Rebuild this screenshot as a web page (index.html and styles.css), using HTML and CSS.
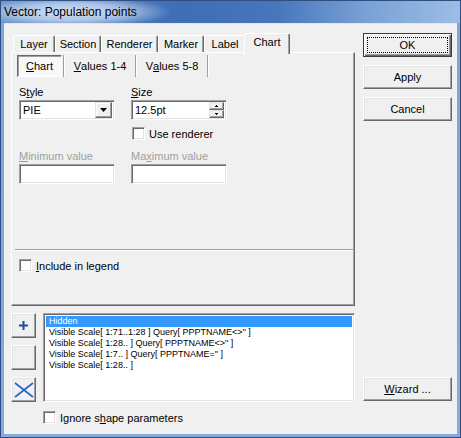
FILE: index.html
```html
<!DOCTYPE html>
<html>
<head>
<meta charset="utf-8">
<link rel="stylesheet" href="styles.css">
</head>
<body>
<div class="window">
  <div class="titlebar"><span class="title">Vector: Population points</span></div>
  <div class="client">
    <div class="leftcol">
      <div class="tabstrip">
        <div class="tab w42">Layer</div>
        <div class="tab w46">Section</div>
        <div class="tab w57">Renderer</div>
        <div class="tab w46">Marker</div>
        <div class="tab w42">Label</div>
        <div class="tab tab-active">Chart</div>
      </div>
      <div class="panel">
        <div class="itabs">
          <div class="itab itab-active"><u>C</u>hart</div>
          <div class="isep"></div>
          <div class="itab"><u>V</u>alues 1-4</div>
          <div class="isep"></div>
          <div class="itab">V<u>a</u>lues 5-8</div>
          <div class="isep"></div>
        </div>
        <div class="form">
          <div class="lbl">S<u>t</u>yle</div>
          <div class="lbl"><u>S</u>ize</div>
          <div class="field combo">
            <span class="val">PIE</span>
            <span class="dropbtn"><svg width="7" height="4" viewBox="0 0 7 4"><path d="M0 0H7L3.5 4Z" fill="#000"/></svg></span>
          </div>
          <div class="field">
            <span class="val">12.5pt</span>
            <span class="spinner">
              <span class="spinhalf"><svg width="3" height="2" viewBox="0 0 3 2"><path d="M1 0H2V1H3V2H0V1H1Z" fill="#000"/></svg></span>
              <span class="spinhalf"><svg width="3" height="2" viewBox="0 0 3 2"><path d="M0 0H3V1H2V2H1V1H0Z" fill="#000"/></svg></span>
            </span>
          </div>
          <div class="empty"></div>
          <div class="check renderer"><span class="box"></span><span>Use renderer</span></div>
          <div class="lbl dis low"><u>M</u>inimum value</div>
          <div class="lbl dis low">Ma<u>x</u>imum value</div>
          <div class="field"></div>
          <div class="field"></div>
        </div>
        <div class="hsep"></div>
        <div class="check legend"><span class="box"></span><span><u>I</u>nclude in legend</span></div>
      </div>
      <div class="lower">
        <div class="tools">
          <div class="btn tool"><svg width="9" height="9" viewBox="0 0 9 9"><path d="M3.5 0H5.5V3.5H9V5.5H5.5V9H3.5V5.5H0V3.5H3.5Z" fill="#1d4e9e"/></svg></div>
          <div class="btn tool"></div>
          <div class="btn tool"><svg width="20" height="16" viewBox="0 0 20 16"><path d="M1 1L19 15M19 1L1 15" stroke="#2a63c0" stroke-width="1.6" fill="none"/></svg></div>
        </div>
        <div class="list">
          <div class="row sel">Hidden</div>
          <div class="row">Visible Scale[ 1:71..1:28 ] Query[ PPPTNAME&lt;&gt;'' ]</div>
          <div class="row">Visible Scale[ 1:28.. ] Query[ PPPTNAME&lt;&gt;'' ]</div>
          <div class="row">Visible Scale[ 1:7.. ] Query[ PPPTNAME='' ]</div>
          <div class="row">Visible Scale[ 1:28.. ]</div>
        </div>
      </div>
      <div class="check ignore"><span class="box"></span><span>Ignore s<u>h</u>ape parameters</span></div>
    </div>
    <div class="rightcol">
      <div class="btn cmd default"><span class="focus">OK</span></div>
      <div class="btn cmd">Apply</div>
      <div class="btn cmd">Cancel</div>
      <div class="btn cmd wizard"><span><u>W</u>izard ...</span></div>
    </div>
  </div>
</div>
</body>
</html>
```

FILE: styles.css
```css
* { box-sizing: border-box; }
html, body { margin: 0; padding: 0; background: #f0f0f0; }
body { font-family: "Liberation Sans", Arial, sans-serif; font-size: 11px; color: #000; }

.window {
  width: 461px; height: 438px;
  display: flex; flex-direction: column;
  border: 1px solid #2f4f80;
  background: linear-gradient(180deg, #7ea4d9 0%, #86aadc 100%);
}
.titlebar {
  height: 22px; flex: none;
  display: flex; align-items: center;
  padding-left: 3px;
  background:
    radial-gradient(ellipse 100px 16px at 70px 11px, rgba(218,231,248,0.95) 0%, rgba(218,231,248,0.65) 55%, rgba(218,231,248,0) 100%),
    linear-gradient(90deg, #5f8bc9 0%, #3d6eb6 40%, #4776bb 60%, #7aa2d6 80%, #9dbde4 100%);
}
.title { font-size: 12px; color: #000; }

.client {
  flex: 1;
  margin: 0 3px 3px 3px;
  background: #f0f0f0;
  border-top: 1px solid #dfe6ef;
  display: flex;
  padding: 9px 0 0 7px;
}

.leftcol { width: 344px; display: flex; flex-direction: column; }

.tabstrip { height: 19px; display: flex; align-items: flex-end; padding-left: 2px; position: relative; z-index: 2; }
.tab {
  height: 17px;
  border-left: 1px solid #fff; border-top: 1px solid #fff;
  border-right: 1px solid #696969;
  box-shadow: inset -1px 0 #a0a0a0;
  border-radius: 2px 2px 0 0;
  display: flex; align-items: center; justify-content: center;
  background: #f0f0f0;
}
.w42 { width: 42px; }
.w46 { width: 46px; }
.w57 { width: 57px; }
.tab-active {
  width: 46px; height: 21px;
  margin: 0 -2px -2px -2px;
  padding-bottom: 4px;
  position: relative;
}

.panel {
  height: 254px;
  border-left: 1px solid #fff; border-top: 1px solid #fff;
  border-right: 1px solid #696969; border-bottom: 1px solid #696969;
  box-shadow: inset -1px -1px #a0a0a0;
  padding: 2px 0 0 5px;
  display: flex; flex-direction: column;
}

.itabs { display: flex; height: 22px; }
.itab { width: 70px; display: flex; align-items: center; justify-content: center; }
.itab-active {
  width: 45px; margin-right: 1px;
  border: 1px solid; border-color: #696969 #fff #fff #696969;
  box-shadow: inset 1px 1px #a0a0a0;
  background: #f8f8f8;
}
.isep { width: 2px; border-left: 1px solid #a0a0a0; border-right: 1px solid #fff; }

.form {
  display: grid;
  grid-template-columns: 96px 96px;
  column-gap: 16px;
  grid-template-rows: 14px 20px 20px 24px 20px;
  margin: 9px 0 0 2px;
}
.lbl { line-height: 13px; }
.lbl.low { align-self: end; line-height: 15px; }
.dis { color: #a0a0a0; }

.field {
  height: 20px;
  border: 1px solid; border-color: #a0a0a0 #fff #fff #a0a0a0;
  box-shadow: inset 1px 1px #696969, inset -1px -1px #e3e3e3;
  background: #fff;
  display: flex; align-items: center;
  padding: 2px 2px 2px 3px;
}
.val { flex: 1; }
.dropbtn {
  width: 17px; height: 16px;
  border: 1px solid; border-color: #e3e3e3 #696969 #696969 #e3e3e3;
  box-shadow: inset -1px -1px #a0a0a0, inset 1px 1px #fff;
  background: #f0f0f0;
  display: flex; align-items: center; justify-content: center;
}
.spinner { width: 15px; height: 16px; display: flex; flex-direction: column; }
.spinhalf {
  flex: 1;
  border: 1px solid; border-color: #e3e3e3 #696969 #696969 #e3e3e3;
  box-shadow: inset -1px -1px #a0a0a0;
  background: #f0f0f0;
  display: flex; align-items: center; justify-content: center;
}

.check { display: flex; align-items: center; gap: 4px; }
.box {
  width: 13px; height: 13px; flex: none;
  border: 1px solid; border-color: #a0a0a0 #fff #fff #a0a0a0;
  box-shadow: inset 1px 1px #696969, inset -1px -1px #e3e3e3;
  background: #fff;
}
.renderer { align-self: end; margin-left: 1px; height: 13px; }

.hsep { height: 2px; border-top: 1px solid #a0a0a0; border-bottom: 1px solid #fff; margin: 65px 1px 0 -2px; }
.legend { margin: 8px 0 0 2px; height: 13px; }

.lower { display: flex; gap: 7px; margin-top: 7px; height: 89px; }
.tools { display: flex; flex-direction: column; gap: 7px; }
.btn {
  border: 1px solid; border-color: #fff #696969 #696969 #fff;
  box-shadow: inset -1px -1px #a0a0a0, inset 1px 1px #e3e3e3;
  background: #f0f0f0;
  display: flex; align-items: center; justify-content: center;
}
.tool { width: 25px; height: 25px; }
.list {
  flex: 1;
  border: 1px solid; border-color: #a0a0a0 #fff #fff #a0a0a0;
  box-shadow: inset 1px 1px #696969, inset -1px -1px #e3e3e3;
  background: #fff;
  padding: 2px 2px;
  font-size: 9px;
}
.row { height: 11px; line-height: 11px; padding-left: 3px; white-space: pre; }
.row.sel { background: #3399ff; color: #fff; }

.ignore { margin: 9px 0 0 32px; height: 13px; }

.rightcol { margin-left: 8px; width: 89px; display: flex; flex-direction: column; }
.cmd { width: 89px; height: 24px; margin-bottom: 8px; }
.default { border: 1px solid #3a3a3a; box-shadow: inset 1px 1px #fff, inset -1px -1px #696969, inset -2px -2px #a0a0a0; padding: 3px; }
.focus { flex: 1; align-self: stretch; border: 1px dotted #000; display: flex; align-items: center; justify-content: center; }
.wizard { margin-top: 248px; }
```
